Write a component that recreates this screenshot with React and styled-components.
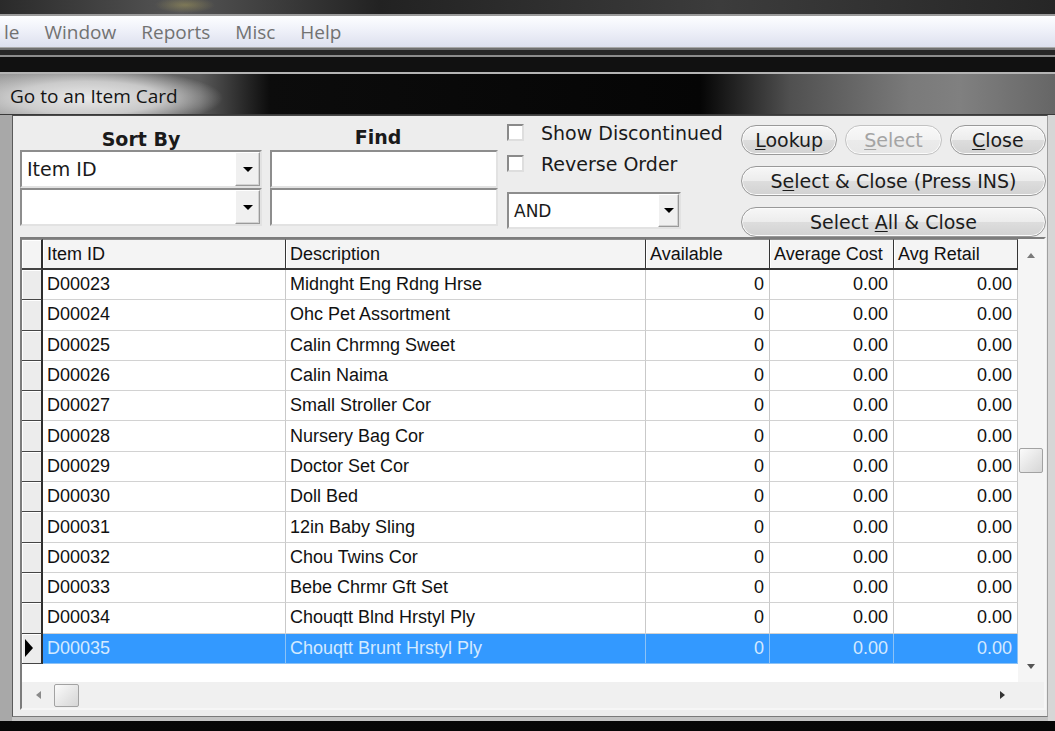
import React from 'react';
import styled, { createGlobalStyle } from 'styled-components';

const GlobalStyle = createGlobalStyle`
  html, body {
    margin: 0;
    padding: 0;
    background: #000;
    overflow: hidden;
  }
`;

const COLS = '21px 243px 360px 124px 124px 124px';

const items = [
  ['D00023', 'Midnght Eng Rdng Hrse'],
  ['D00024', 'Ohc Pet Assortment'],
  ['D00025', 'Calin Chrmng Sweet'],
  ['D00026', 'Calin Naima'],
  ['D00027', 'Small Stroller Cor'],
  ['D00028', 'Nursery Bag Cor'],
  ['D00029', 'Doctor Set Cor'],
  ['D00030', 'Doll Bed'],
  ['D00031', '12in Baby Sling'],
  ['D00032', 'Chou Twins Cor'],
  ['D00033', 'Bebe Chrmr Gft Set'],
  ['D00034', 'Chouqtt Blnd Hrstyl Ply'],
  ['D00035', 'Chouqtt Brunt Hrstyl Ply'],
];

const Screen = styled.div`
  width: 1055px;
  height: 731px;
  display: flex;
  flex-direction: column;
  background: linear-gradient(#444 0, #1a1a1a 2px, #060606);
  overflow: hidden;
`;

const Backdrop = styled.div`
  flex: none;
  height: 14px;
  background:
    radial-gradient(ellipse 30px 8px at 185px 5px, rgba(160, 150, 90, 0.55), transparent),
    linear-gradient(90deg, #2a2a2a, #555 180px, #222 380px, #3c3c3c 720px, #262626 1055px);
`;

const MenuBar = styled.nav`
  flex: none;
  height: 31px;
  display: flex;
  align-items: center;
  gap: 25px;
  padding-left: 4px;
  border-top: 2px solid #9a9a9a;
  border-bottom: 1px solid #a8a8a8;
  background: linear-gradient(#fdfeff, #eff1f9 45%, #dde0ee);
  font-family: "Open Sans", "Noto Sans", sans-serif;
  font-size: 19px;
  color: #727272;
`;

const MenuItem = styled.span`
  white-space: nowrap;
`;

const AppEdge = styled.div`
  flex: none;
  height: 26px;
  background: linear-gradient(
    #707070 0 2px,
    #262626 2px 7px,
    #8c8c8c 7px 9px,
    #111 9px 24px,
    #b4b4b4 24px 26px
  );
`;

const Dialog = styled.div`
  flex: none;
  height: 647px;
  display: flex;
  flex-direction: column;
`;

const TitleBar = styled.div`
  flex: none;
  height: 41px;
  box-sizing: border-box;
  display: flex;
  align-items: center;
  padding: 3px 0 0 10px;
  background:
    radial-gradient(ellipse 135px 30px at 88px 60%, rgba(236, 236, 236, 0.98), rgba(210, 210, 210, 0.9) 55%, transparent 100%),
    linear-gradient(90deg, #9a9a9a 0, #5a5a5a 200px, #0c0c0c 270px, #050505 700px, #505050 790px, #7a7a7a 910px, #808080 960px, #666 1055px);
  border-bottom: 1px solid #3a3a3a;
  font-family: "Open Sans", "Noto Sans", sans-serif;
  font-size: 19px;
  color: #141414;
`;

const Frame = styled.div`
  flex: 1;
  display: flex;
  padding-bottom: 4px;
  border-left: 12px solid #a8a8a8;
  border-right: 7px solid #d6d6d6;
  background: #c4c4c4;
`;

const Client = styled.div`
  flex: 1;
  display: flex;
  flex-direction: column;
  padding: 8px 1px 6px 7px;
  background: #ededed;
  border-style: solid;
  border-width: 1px;
  border-color: #4a4a4a #a0a0a0 #7a7a7a #5a5a5a;
  font-family: "DejaVu Sans", "Liberation Sans", sans-serif;
  font-size: 19px;
  color: #1a1a1a;
`;

const Controls = styled.div`
  flex: none;
  height: 113px;
  display: flex;
  align-items: flex-start;
`;

const FieldColumn = styled.div`
  width: ${p => p.$width}px;
  margin-left: ${p => p.$gap || 0}px;
  display: flex;
  flex-direction: column;
`;

const Heading = styled.div`
  height: 26px;
  display: flex;
  align-items: center;
  justify-content: center;
  padding-top: ${p => p.$drop || 0}px;
  padding-right: ${p => p.$shift || 0}px;
  box-sizing: border-box;
  font-weight: bold;
`;

const Field = styled.div`
  height: ${p => p.$height || 38}px;
  margin-top: ${p => p.$gap || 0}px;
  box-sizing: border-box;
  display: flex;
  align-items: stretch;
  background: #fff;
  border: 2px solid;
  border-color: #8d8d8d #e2e2e2 #e2e2e2 #8d8d8d;
`;

const FieldText = styled.span`
  flex: 1;
  display: flex;
  align-items: center;
  padding-left: 5px;
  white-space: nowrap;
  font-size: ${p => (p.$small ? '17px' : '19px')};
`;

const DropButton = styled.div`
  width: ${p => p.$width || 25}px;
  flex: none;
  display: flex;
  align-items: center;
  justify-content: center;
  box-sizing: border-box;
  background: #f0f0f0;
  border: 1px solid;
  border-color: #fff #9a9a9a #9a9a9a #fff;
  box-shadow: inset -1px -1px 0 #d2d2d2;

  &::after {
    content: '';
    border-top: 5px solid #000;
    border-left: 5px solid transparent;
    border-right: 5px solid transparent;
  }
`;

const OptionsColumn = styled.div`
  width: 174px;
  margin-left: 9px;
  display: flex;
  flex-direction: column;
`;

const CheckRow = styled.label`
  height: 17px;
  display: flex;
  align-items: center;
  gap: 17px;
  margin-top: ${p => p.$gap || 0}px;
  white-space: nowrap;
`;

const CheckBox = styled.span`
  width: 17px;
  height: 17px;
  flex: none;
  box-sizing: border-box;
  background: #fff;
  border: 2px solid;
  border-color: #8a8a8a #dedede #dedede #8a8a8a;
`;

const ButtonColumn = styled.div`
  flex: 1;
  margin-left: 60px;
  padding-top: 1px;
  display: flex;
  flex-direction: column;
  gap: 11px;
`;

const ButtonRow = styled.div`
  display: flex;
  gap: 8px;
`;

const Button = styled.button`
  flex: ${p => (p.$wide ? 'none' : '1')};
  height: 30px;
  padding: 0;
  border: 1px solid ${p => (p.disabled ? '#c2c2c2' : '#999')};
  border-radius: 15px;
  background: ${p =>
    p.disabled
      ? 'linear-gradient(#f8f8f8, #f2f2f2 50%, #ebebeb 51%, #e7e7e7)'
      : 'linear-gradient(#f7f7f7, #ececec 50%, #dddddd 51%, #d2d2d2)'};
  box-shadow: inset 0 0 0 1px #fbfbfb;
  font-family: "DejaVu Sans", "Liberation Sans", sans-serif;
  font-size: 19px;
  color: ${p => (p.disabled ? '#a4a4a4' : '#1c1c1c')};
  white-space: nowrap;

  u {
    text-underline-offset: 2px;
  }
`;

const Grid = styled.div`
  flex: 1;
  display: grid;
  grid-template-columns: 1fr 26px;
  grid-template-rows: 1fr 26px;
  border: 2px solid;
  border-color: #7c7c7c #f6f6f6 #f6f6f6 #7c7c7c;
  background: #fff;
  font-family: "Liberation Sans", Arial, sans-serif;
  font-size: 18px;
  color: #111;
`;

const Table = styled.div`
  display: flex;
  flex-direction: column;
  background: #fff;
  overflow: hidden;
`;

const HeaderRow = styled.div`
  display: grid;
  grid-template-columns: ${COLS};
  height: 31px;
  flex: none;
`;

const HeaderCell = styled.div`
  display: flex;
  align-items: center;
  padding-left: 4px;
  box-sizing: border-box;
  background: #f4f4f4;
  border-top: 1px solid #8c8c8c;
  border-bottom: 2px solid #353535;
  border-right: 1px solid #353535;
  box-shadow: inset 1px 0 0 #fff;
  white-space: nowrap;
`;

const Row = styled.div`
  display: grid;
  grid-template-columns: ${COLS};
  height: 30.3px;
  flex: none;
  background: ${p => (p.$selected ? '#3399ff' : '#fff')};
  color: ${p => (p.$selected ? '#d4eaff' : '#111')};
`;

const Cell = styled.div`
  display: flex;
  align-items: center;
  justify-content: ${p => (p.$num ? 'flex-end' : 'flex-start')};
  padding: ${p => (p.$num ? '0 5px 0 0' : '0 0 0 4px')};
  box-sizing: border-box;
  border-right: 1px solid ${p => (p.$selected ? '#8cc2f6' : '#c9c9c9')};
  border-bottom: 1px solid ${p => (p.$selected ? '#8cc2f6' : '#d2d2d2')};
  white-space: nowrap;
  overflow: hidden;
`;

const Marker = styled.div`
  display: flex;
  align-items: center;
  padding-left: 3px;
  box-sizing: border-box;
  background: ${p => (p.$head ? '#f4f4f4' : '#ececec')};
  border-top: ${p => (p.$head ? '1px solid #8c8c8c' : 'none')};
  border-right: 2px solid #2e2e2e;
  border-bottom: ${p => (p.$head ? '2px' : '1px')} solid #454545;
  box-shadow: inset 1px 1px 0 #fff;
`;

const Pointer = styled.span`
  border-left: 8px solid #000;
  border-top: 9px solid transparent;
  border-bottom: 9px solid transparent;
`;

const Filler = styled.div`
  flex: 1;
  background: #fff;
`;

const VScroll = styled.div`
  display: flex;
  flex-direction: column;
  background: #f5f5f5;
`;

const ArrowBox = styled.div`
  flex: none;
  width: ${p => p.$w || 'auto'};
  height: ${p => p.$h || 'auto'};
  display: flex;
  align-items: center;
  justify-content: center;
`;

const Arrow = styled.span`
  width: 0;
  height: 0;
  border: 4px solid transparent;
  ${p => p.$dir === 'up' && `border-bottom: 5px solid ${p.$color}; border-top-width: 0;`}
  ${p => p.$dir === 'down' && `border-top: 5px solid ${p.$color}; border-bottom-width: 0;`}
  ${p => p.$dir === 'left' && `border-right: 5px solid ${p.$color}; border-left-width: 0;`}
  ${p => p.$dir === 'right' && `border-left: 5px solid ${p.$color}; border-right-width: 0;`}
`;

const Track = styled.div`
  flex: 1;
  display: flex;
  flex-direction: ${p => (p.$horizontal ? 'row' : 'column')};
  align-items: center;
`;

const Thumb = styled.div`
  flex: none;
  width: ${p => (p.$horizontal ? '25px' : '24px')};
  height: ${p => (p.$horizontal ? '23px' : '25px')};
  margin-top: ${p => (p.$horizontal ? 0 : 177)}px;
  box-sizing: border-box;
  border: 1px solid #a2a2a2;
  border-radius: 2px;
  background: linear-gradient(135deg, #fbfbfb, #e4e4e4 60%, #d6d6d6);
`;

const HScroll = styled.div`
  display: flex;
  align-items: center;
  background: #f0f0f0;
`;

const Corner = styled.div`
  background: #f0f0f0;
`;

const menu = ['le', 'Window', 'Reports', 'Misc', 'Help'];

export default function App() {
  return (
    <Screen>
      <GlobalStyle />
      <Backdrop />
      <MenuBar>
        {menu.map(m => (
          <MenuItem key={m}>{m}</MenuItem>
        ))}
      </MenuBar>
      <AppEdge />
      <Dialog>
        <TitleBar>Go to an Item Card</TitleBar>
        <Frame>
          <Client>
            <Controls>
              <FieldColumn $width={242}>
                <Heading $drop={3}>Sort By</Heading>
                <Field>
                  <FieldText>Item ID</FieldText>
                  <DropButton />
                </Field>
                <Field>
                  <FieldText />
                  <DropButton />
                </Field>
              </FieldColumn>

              <FieldColumn $width={228} $gap={8}>
                <Heading $shift={12}>Find</Heading>
                <Field>
                  <FieldText />
                </Field>
                <Field>
                  <FieldText />
                </Field>
              </FieldColumn>

              <OptionsColumn>
                <CheckRow>
                  <CheckBox />
                  Show Discontinued
                </CheckRow>
                <CheckRow $gap={14}>
                  <CheckBox />
                  Reverse Order
                </CheckRow>
                <Field $height={37} $gap={20}>
                  <FieldText $small>AND</FieldText>
                  <DropButton $width={21} />
                </Field>
              </OptionsColumn>

              <ButtonColumn>
                <ButtonRow>
                  <Button><u>L</u>ookup</Button>
                  <Button disabled><u>S</u>elect</Button>
                  <Button><u>C</u>lose</Button>
                </ButtonRow>
                <Button $wide>S<u>e</u>lect &amp; Close (Press INS)</Button>
                <Button $wide>Select <u>A</u>ll &amp; Close</Button>
              </ButtonColumn>
            </Controls>

            <Grid>
              <Table>
                <HeaderRow>
                  <Marker $head />
                  <HeaderCell>Item ID</HeaderCell>
                  <HeaderCell>Description</HeaderCell>
                  <HeaderCell>Available</HeaderCell>
                  <HeaderCell>Average Cost</HeaderCell>
                  <HeaderCell>Avg Retail</HeaderCell>
                </HeaderRow>
                {items.map(([id, desc], i) => {
                  const sel = i === items.length - 1;
                  return (
                    <Row key={id} $selected={sel}>
                      <Marker>{sel && <Pointer />}</Marker>
                      <Cell $selected={sel}>{id}</Cell>
                      <Cell $selected={sel}>{desc}</Cell>
                      <Cell $selected={sel} $num>0</Cell>
                      <Cell $selected={sel} $num>0.00</Cell>
                      <Cell $selected={sel} $num>0.00</Cell>
                    </Row>
                  );
                })}
                <Filler />
              </Table>

              <VScroll>
                <ArrowBox $h="32px">
                  <Arrow $dir="up" $color="#7a7a7a" />
                </ArrowBox>
                <Track>
                  <Thumb />
                </Track>
                <ArrowBox $h="32px">
                  <Arrow $dir="down" $color="#555" />
                </ArrowBox>
              </VScroll>

              <HScroll>
                <ArrowBox $w="32px">
                  <Arrow $dir="left" $color="#8a8a8a" />
                </ArrowBox>
                <Track $horizontal>
                  <Thumb $horizontal />
                </Track>
                <ArrowBox $w="32px">
                  <Arrow $dir="right" $color="#333" />
                </ArrowBox>
              </HScroll>
              <Corner />
            </Grid>
          </Client>
        </Frame>
      </Dialog>
    </Screen>
  );
}
